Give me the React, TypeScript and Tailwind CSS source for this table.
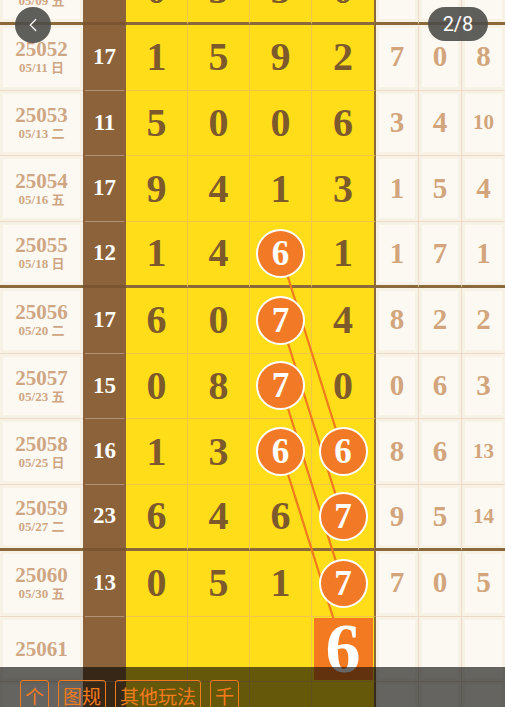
import React from 'react';
import { ChevronLeft } from 'lucide-react';

type Row = {
  id: string;
  date?: string;
  sum?: string;
  d?: number[];
  r?: string[];
  thick?: boolean;
  hits?: number[];
  predict?: number;
};

const rows: Row[] = [
  { id: '25051', date: '05/09 五', sum: '14', d: [0, 3, 5, 0], r: ['3', '4', '2'], thick: true },
  { id: '25052', date: '05/11 日', sum: '17', d: [1, 5, 9, 2], r: ['7', '0', '8'] },
  { id: '25053', date: '05/13 二', sum: '11', d: [5, 0, 0, 6], r: ['3', '4', '10'] },
  { id: '25054', date: '05/16 五', sum: '17', d: [9, 4, 1, 3], r: ['1', '5', '4'] },
  { id: '25055', date: '05/18 日', sum: '12', d: [1, 4, 6, 1], r: ['1', '7', '1'], thick: true, hits: [2] },
  { id: '25056', date: '05/20 二', sum: '17', d: [6, 0, 7, 4], r: ['8', '2', '2'], hits: [2] },
  { id: '25057', date: '05/23 五', sum: '15', d: [0, 8, 7, 0], r: ['0', '6', '3'], hits: [2] },
  { id: '25058', date: '05/25 日', sum: '16', d: [1, 3, 6, 6], r: ['8', '6', '13'], hits: [2, 3] },
  { id: '25059', date: '05/27 二', sum: '23', d: [6, 4, 6, 7], r: ['9', '5', '14'], thick: true, hits: [3] },
  { id: '25060', date: '05/30 五', sum: '13', d: [0, 5, 1, 7], r: ['7', '0', '5'], hits: [3] },
  { id: '25061', predict: 6 },
  { id: '' },
];

const serif = "font-['Liberation_Serif','Noto_Sans_CJK_SC',serif]";

// line segments joining the repeated digits (page coordinates)
const links = [
  [281, 255, 343, 452],
  [281, 321, 343, 518],
  [281, 386, 343, 584],
  [281, 452, 343, 649],
];

function TableRow({ row }: { row: Row }) {
  const bottom = row.thick ? 'border-b-[3px] border-b-[#8a6a3b]' : 'border-b border-b-[#ecdac6]';
  const yBottom = row.thick ? 'border-b-[3px] border-b-[#8a6a3b]' : 'border-b border-b-[#f1c44c]';
  return (
    <div className="grid h-[65.75px] grid-cols-[83px_43px_62px_62px_62px_64px_43px_43px_43px]">
      {/* issue / date */}
      <div className={`bg-[#f8f2e6] p-[3px] ${bottom}`}>
        <div className={`flex h-full flex-col items-center justify-center bg-[#fcf9f2] ${serif} font-bold text-[#cfa684]`}>
          {row.id && <span className="text-[21px] leading-[22px]">{row.id}</span>}
          {row.date && <span className="text-[13px] leading-[16px]">{row.date}</span>}
        </div>
      </div>
      {/* sum */}
      <div className={`bg-[#8b6239] px-[2px] ${row.thick ? 'border-b-[3px] border-b-[#7a5530]' : ''}`}>
        <div className={`flex h-full items-center justify-center ${serif} text-[23px] font-bold text-white ${row.thick ? '' : 'border-b border-b-[#b39373]'}`}>
          {row.sum}
        </div>
      </div>
      {/* digits */}
      {[0, 1, 2, 3].map((i) => {
        const hit = row.hits?.includes(i);
        const last = i === 3;
        return (
          <div
            key={i}
            className={`flex items-center justify-center bg-[#ffdd19] ${yBottom} ${last ? 'border-r-2 border-r-[#8a6a3b]' : 'border-r border-r-[#f1c44c]'} ${serif} font-bold`}
          >
            {row.predict !== undefined && last ? (
              <div className="relative z-10 mt-[1px] flex h-[62px] w-[59px] items-center justify-center bg-[#f47a22] text-[70px] leading-none text-white">
                {row.predict}
              </div>
            ) : hit ? (
              <div className="relative z-10 flex h-[49px] w-[49px] items-center justify-center rounded-full border-[2.5px] border-white bg-[#f27a26] text-[35px] leading-none text-white">
                {row.d?.[i]}
              </div>
            ) : (
              <span className="text-[40px] leading-none text-[#7d5a2c]">{row.d?.[i]}</span>
            )}
          </div>
        );
      })}
      {/* misc */}
      {[0, 1, 2].map((i) => {
        const v = row.r?.[i];
        return (
          <div key={i} className={`bg-[#f8f2e6] p-[3px] ${bottom} ${i < 2 ? 'border-r border-r-[#ecdac6]' : ''}`}>
            <div className={`flex h-full items-center justify-center bg-[#fcf9f2] ${serif} font-bold text-[#d2a57c] ${v && v.length > 1 ? 'text-[21px]' : 'text-[29px]'}`}>
              {v}
            </div>
          </div>
        );
      })}
    </div>
  );
}

export default function App() {
  return (
    <div className="relative h-[707px] w-[505px] overflow-hidden bg-[#fcf9f2]">
      <div className="-mt-[41px]">
        {rows.map((row, idx) => (
          <TableRow key={idx} row={row} />
        ))}
      </div>

      <svg className="pointer-events-none absolute left-0 top-0 z-[5]" width="505" height="707">
        {links.map(([x1, y1, x2, y2], i) => (
          <line key={i} x1={x1} y1={y1} x2={x2} y2={y2} stroke="#f07a1c" strokeWidth="2.2" />
        ))}
      </svg>

      {/* back button */}
      <button className="absolute left-[15px] top-[7px] z-20 flex h-[36px] w-[36px] items-center justify-center rounded-full bg-[#4d4d4a]/90 text-white">
        <ChevronLeft size={22} strokeWidth={1.3} />
      </button>

      {/* page indicator */}
      <div className="absolute right-[17px] top-[7px] z-20 flex h-[34px] w-[60px] items-center justify-center rounded-full bg-[#4d4d4a]/90 font-['Roboto',sans-serif] text-[20px] text-white">
        2/8
      </div>

      {/* bottom bar */}
      <div className="absolute bottom-0 left-0 z-20 flex h-[40px] w-full items-start gap-[9px] bg-black/60 pl-[20px] pt-[13px] font-['Noto_Sans_CJK_SC',sans-serif] text-[19px] leading-[30px] text-[#f47b1c]">
        {['个', '图规', '其他玩法', '千'].map((t) => (
          <div key={t} className="h-[34px] rounded-[3px] border border-[#f47b1c] px-[4px]">
            {t}
          </div>
        ))}
      </div>
    </div>
  );
}
